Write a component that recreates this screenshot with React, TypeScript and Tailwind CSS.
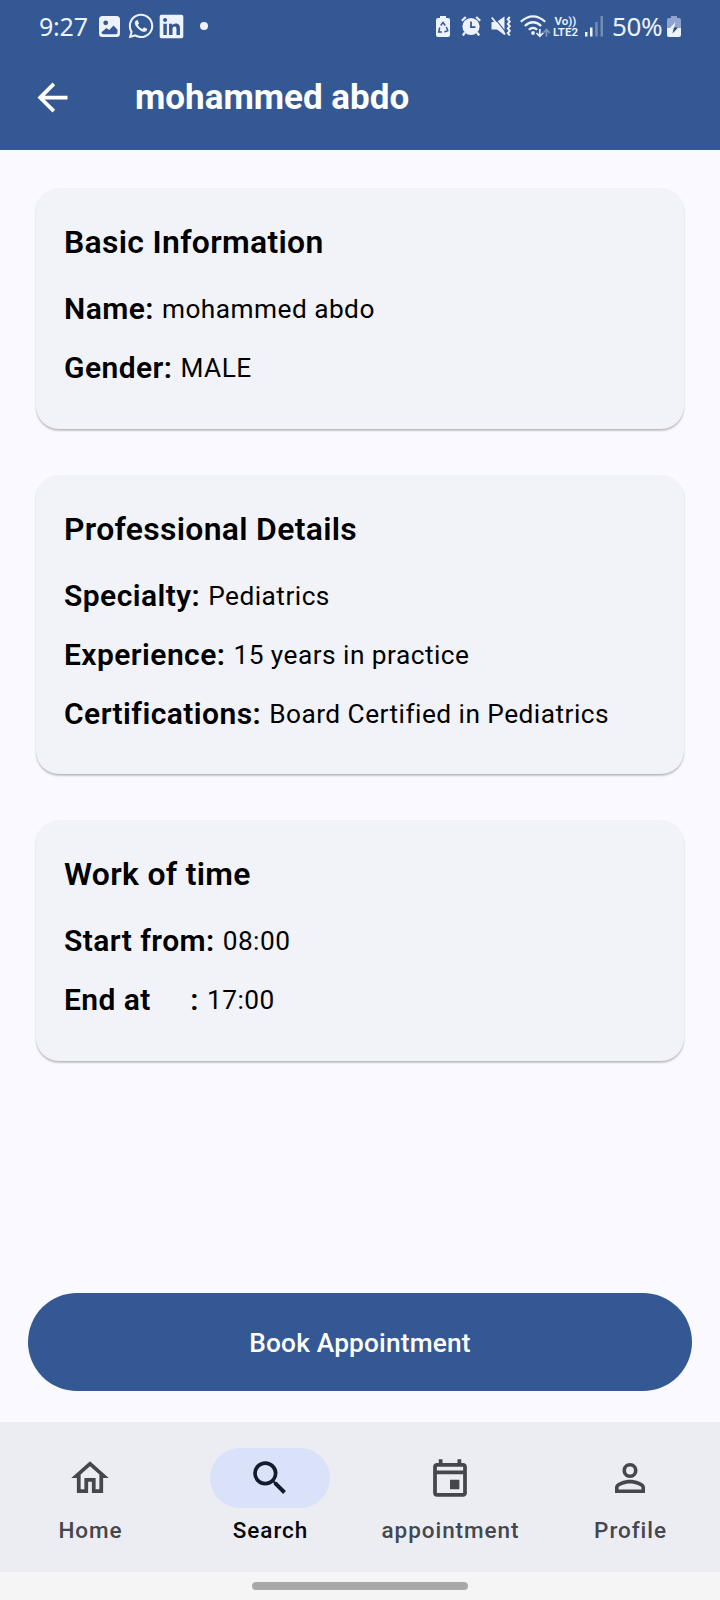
import type { ReactNode } from 'react';
import { FaLinkedin, FaWhatsapp } from 'react-icons/fa';

function StatusBar() {
  return (
    <div className="flex h-[52px] items-center pl-[39px] pr-[39px] text-[#eef2fc]">
      <span className="w-[50px] whitespace-nowrap font-['Noto_Sans',sans-serif] text-[25px] leading-[52px] tracking-[-0.2px]">9:27</span>
      <svg className="ml-[10px] h-[21px] w-[21px] shrink-0" viewBox="0 0 21 21" fill="currentColor">
        <path fillRule="evenodd" d="M3.5 0h14A3.5 3.5 0 0 1 21 3.500v14a3.500 3.500 0 0 1-3.500 3.500h-14A3.500 3.500 0 0 1 0 17.500v-14A3.500 3.500 0 0 1 3.500 0zM6.700 4.400a2.400 2.400 0 1 0 0 4.800a2.400 2.400 0 0 0 0-4.800zM2.500 16.200q0 2 2 2h12q2 0 2-2v-2.400l-4-4.300l-4.200 4.400l-2.800-1.800z" />
      </svg>
      <FaWhatsapp className="ml-[7px] h-[28px] w-[28px] shrink-0" />
      <FaLinkedin className="ml-[3px] h-[27px] w-[27px] shrink-0" />
      <span className="ml-[15px] h-2 w-2 shrink-0 rounded-full bg-current" />
      <div className="ml-auto flex items-center">
        <svg className="h-[21px] w-[14px]" viewBox="0 0 14 21">
          <path fill="currentColor" d="M4 0h6v2h2a2 2 0 0 1 2 2v15a2 2 0 0 1-2 2H2a2 2 0 0 1-2-2V4a2 2 0 0 1 2-2h2z" />
          <path fill="none" stroke="#345895" strokeWidth="1.500" d="M4.700 9.500L7 6.500l2.300 3M10.300 11l1.500 3.500L8.500 16M6 16H2.700l1-4.500" />
        </svg>
        <svg className="ml-[11px] h-[20px] w-[20px]" viewBox="0 0 20 20">
          <circle cx="10" cy="10.500" r="8.600" fill="currentColor" />
          <path fill="none" stroke="currentColor" strokeWidth="2.200" d="M.8 4.700L4.800 1M19.200 4.700L15.200 1M4 16.500l-2.200 3M16 16.500l2.200 3" />
          <path fill="none" stroke="#345895" strokeWidth="1.800" d="M10 5.500v5.700h4.500" />
        </svg>
        <svg className="ml-[10px] h-[20px] w-[20px]" viewBox="0 0 20 20">
          <path fill="currentColor" d="M.5 6h5L13.500.5v18.500L6 13.500H.5z" />
          <path stroke="#345895" strokeWidth="1.200" d="M2.500 .5L15 16.500" />
          <path fill="none" stroke="currentColor" strokeWidth="1.800" d="M.8 1.500L14 18.500" />
          <path fill="none" stroke="currentColor" strokeWidth="2" d="M18.800 1l-2 2.300 2 2.300-2 2.300 2 2.300-2 2.300 2 2.300-2 2.300 2 2.300" />
        </svg>
        <svg className="ml-[9px] h-[23px] w-[31px]" viewBox="0 0 31 23">
          <g fill="none" stroke="currentColor" strokeWidth="2.200">
            <path d="M.8 6.800Q13 -4 25.200 6.800M4.800 11Q13 3.500 21.200 11M8.800 14.800Q13 11 17.200 14.800" />
            <path strokeWidth="1.700" d="M19.800 14v7M16.500 18l3.300 3.400 3.300-3.400" />
            <path strokeWidth="1.700" opacity=".4" d="M26.500 21.500v-7M23.300 17.800l3.200-3.400 3.200 3.400" />
          </g>
          <circle cx="13" cy="18" r="1.900" fill="currentColor" />
        </svg>
        <div className="ml-px flex w-[27px] flex-col items-center whitespace-nowrap pt-px font-[Roboto,sans-serif] text-[11.5px] font-semibold leading-[11px]">
          <span>Vo))</span>
          <span>LTE2</span>
        </div>
        <svg className="ml-[6px] h-[21px] w-[19px]" viewBox="0 0 19 21" fill="currentColor">
          <path d="M0 16h2.500v4.500H0zM5 11.500h2.500v9H5z" />
          <path opacity=".35" d="M10.200 6h2.500v14.500h-2.500zM15.500 0H18v20.500h-2.500z" />
        </svg>
        <span className="ml-[8px] w-[54px] whitespace-nowrap font-['Noto_Sans',sans-serif] text-[26px] leading-[52px] tracking-[-0.4px]">50%</span>
        <svg className="ml-px h-[21px] w-[14px]" viewBox="0 0 14 21">
          <path fill="#8fa5cf" d="M4 0h6v2h2a2 2 0 0 1 2 2v8H0V4a2 2 0 0 1 2-2h2z" />
          <path fill="currentColor" d="M0 12h14v7a2 2 0 0 1-2 2H2a2 2 0 0 1-2-2z" />
          <path fill="#eef2fc" d="M8.500 6L3 12h4z" />
          <path fill="#27437a" d="M5.500 17.500L11 11.500H7z" />
        </svg>
      </div>
    </div>
  );
}

function Card({ title, className, children }: { title: string; className: string; children: ReactNode }) {
  return (
    <section className={`mx-9 flex flex-col rounded-[23px] bg-[#f2f3f9] px-7 pt-9 shadow-[0_2px_2px_rgba(0,0,0,0.2),0_1px_1px_rgba(0,0,0,0.08)] ${className}`}>
      <h2 className="mb-[19px] text-[31.9px] font-semibold leading-9 tracking-[0.32px]">{title}</h2>
      {children}
    </section>
  );
}

function Row({ label, value }: { label: string; value: string }) {
  return (
    <div className="flex h-[59px] items-center gap-2 whitespace-pre leading-[59px]">
      <span className="text-[30px] font-semibold tracking-[0.44px]">{label}</span>
      <span className="pt-[2px] text-[26.25px] tracking-[0.47px]">{value}</span>
    </div>
  );
}

function NavItem({ label, path, active = false }: { label: string; path: string; active?: boolean }) {
  return (
    <div className={`flex w-[180px] flex-col items-center pt-[26px] ${active ? 'text-[#05070c]' : 'text-[#44474e]'}`}>
      <div className={`flex h-[60px] w-[120px] items-center justify-center rounded-full ${active ? 'bg-[#d9e2f9]' : ''}`}>
        <svg className={`h-[46px] w-[46px] ${active ? 'text-[#121b2d]' : ''}`} viewBox="-0.267 -0.267 24.534 24.534" fill="currentColor" fillRule="evenodd">
          <path d={path} />
        </svg>
      </div>
      <span className="mt-[7px] pl-px text-[22.5px] font-medium leading-[30px] tracking-[0.94px]">{label}</span>
    </div>
  );
}

const icons = {
  home: 'M12 5.690l5 4.500V18h-2v-6H9v6H7v-7.810l5-4.500M12 3L2 12h3v8h6v-6h2v6h6v-8h3L12 3z',
  search: 'M15.500 14h-.79l-.28-.27A6.471 6.471 0 0 0 16 9.500 6.500 6.500 0 1 0 9.500 16c1.610 0 3.090-.59 4.230-1.570l.27.28v.79l5 4.990L20.490 19l-4.990-5zm-6 0C7.010 14 5 11.990 5 9.500S7.010 5 9.500 5 14 7.010 14 9.500 11.990 14 9.500 14z',
  event: 'M19 4h-1V2h-2v2H8V2H6v2H5c-1.100 0-2 .9-2 2v14c0 1.100.9 2 2 2h14c1.100 0 2-.9 2-2V6c0-1.100-.9-2-2-2zm0 16H5V10h14v10zM5 8V6h14v2H5zM12 13h5v5h-5z',
  person: 'M12 5.900a2.100 2.100 0 1 1 0 4.200 2.100 2.100 0 0 1 0-4.200m0 9c2.970 0 6.100 1.460 6.100 2.100v1.100H5.900V17c0-.64 3.130-2.100 6.100-2.100M12 4C9.790 4 8 5.790 8 8s1.790 4 4 4 4-1.790 4-4-1.790-4-4-4zm0 9c-2.670 0-8 1.340-8 4v3h16v-3c0-2.660-5.330-4-8-4z',
};

export default function App() {
  return (
    <div className="flex h-[1600px] w-[720px] flex-col overflow-hidden bg-[#faf9ff] font-[Roboto,sans-serif] text-black">
      <header className="h-[150px] shrink-0 bg-[#345894] text-white">
        <StatusBar />
        <div className="flex h-[90px] items-center pl-[30px]">
          <svg className="h-[45px] w-[45px]" viewBox="0 0 24 24" fill="currentColor">
            <path d="M20 11H7.830l5.590-5.590L12 4l-8 8 8 8 1.410-1.410L7.830 13H20v-2z" />
          </svg>
          <h1 className="ml-[60px] pt-[2px] text-[35px] font-bold">mohammed abdo</h1>
        </div>
      </header>

      <main className="flex grow flex-col">
        <Card title="Basic Information" className="mt-[38px] h-[241px]">
          <Row label="Name:" value="mohammed abdo" />
          <Row label="Gender:" value="MALE" />
        </Card>
        <Card title="Professional Details" className="mt-[46px] h-[299px]">
          <Row label="Specialty:" value="Pediatrics" />
          <Row label="Experience:" value="15 years in practice" />
          <Row label="Certifications:" value="Board Certified in Pediatrics" />
        </Card>
        <Card title="Work of time" className="mt-[46px] h-[241px]">
          <Row label="Start from:" value="08:00" />
          <Row label="End at     :" value="17:00" />
        </Card>
        <button className="mx-7 mb-[31px] mt-auto h-[98px] rounded-full bg-[#345894] pt-[3px] text-[26.25px] font-medium tracking-[0.19px] text-white">
          Book Appointment
        </button>
      </main>

      <nav className="flex h-[150px] shrink-0 bg-[#ecedf3]">
        <NavItem label="Home" path={icons.home} />
        <NavItem label="Search" path={icons.search} active />
        <NavItem label="appointment" path={icons.event} />
        <NavItem label="Profile" path={icons.person} />
      </nav>
      <div className="flex h-7 shrink-0 justify-center bg-[#f5f5f5] pt-[10px]">
        <div className="h-2 w-[216px] rounded-full bg-[#a8a8a8]" />
      </div>
    </div>
  );
}
